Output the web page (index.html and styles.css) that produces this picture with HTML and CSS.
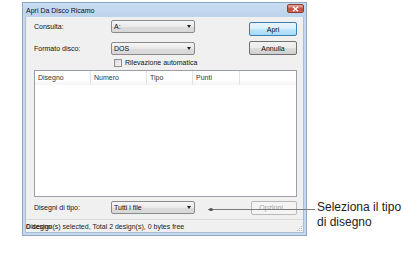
FILE: index.html
```html
<!DOCTYPE html>
<html>
<head>
<meta charset="utf-8">
<link rel="stylesheet" href="styles.css">
</head>
<body>
<div class="stage">
  <div class="dialog">
    <div class="titlebar">
      <span class="title">Apri Da Disco Ricamo</span>
      <span class="close"><svg width="7" height="6" viewBox="0 0 7 6"><path d="M1 0.8 L6 5.2 M6 0.8 L1 5.2" stroke="#fff" stroke-width="1.4"/></svg></span>
    </div>
    <div class="client">
      <div class="top">
        <div class="fields">
          <div class="row">
            <span class="label">Consulta:</span>
            <div class="combo"><span>A:</span><i class="arrow"></i></div>
          </div>
          <div class="row row2">
            <span class="label">Formato disco:</span>
            <div class="combo"><span>DOS</span><i class="arrow"></i></div>
          </div>
          <div class="check-row"><span class="check"></span><span>Rilevazione automatica</span></div>
        </div>
        <div class="buttons">
          <div class="btn default">Apri</div>
          <div class="btn">Annulla</div>
        </div>
      </div>
      <div class="list">
        <div class="list-header">
          <span class="col c1">Disegno</span>
          <span class="col c2">Numero</span>
          <span class="col c3">Tipo</span>
          <span class="col c4">Punti</span>
          <span class="col c5"></span>
        </div>
      </div>
      <div class="bottom-row">
        <span class="label">Disegni di tipo:</span>
        <div class="combo"><span>Tutti i file</span><i class="arrow"></i></div>
        <div class="btn disabled">Opzioni...</div>
      </div>
      <div class="status">
        <span class="status-text">0 design(s) selected, Total 2 design(s), 0 bytes free</span>
        <span class="status-over">Disegno</span>
        <svg class="grip" width="8" height="8" viewBox="0 0 8 8">
          <rect x="6" y="2" width="1" height="1" fill="#b5b5b5"/>
          <rect x="4" y="4" width="1" height="1" fill="#b5b5b5"/>
          <rect x="6" y="4" width="1" height="1" fill="#b5b5b5"/>
          <rect x="2" y="6" width="1" height="1" fill="#b5b5b5"/>
          <rect x="4" y="6" width="1" height="1" fill="#b5b5b5"/>
          <rect x="6" y="6" width="1" height="1" fill="#b5b5b5"/>
        </svg>
      </div>
    </div>
  </div>
  <div class="callout-line"><span class="dot"></span></div>
  <div class="callout-text">Seleziona il tipo<br>di disegno</div>
</div>
</body>
</html>
```

FILE: styles.css
```css
* { box-sizing: border-box; }
html, body { margin: 0; padding: 0; background: #fff; }
body { width: 403px; height: 255px; overflow: hidden; font-family: "Liberation Sans", Arial, sans-serif; }

.stage { position: relative; width: 403px; height: 255px; padding: 2px 0 0 22px; }

.dialog {
  width: 285px;
  height: 234px;
  border: 1px solid #8ea8c4;
  background: #c4d9ef;
  padding: 0 2px 2px 2px;
  display: flex;
  flex-direction: column;
  font-size: 7px;
  color: #111;
}

.titlebar {
  height: 14px;
  display: flex;
  align-items: flex-start;
  justify-content: space-between;
  background: linear-gradient(#c9dcf1, #bcd3ec);
  margin: 0 -2px;
  padding: 0 2px 0 3px;
}
.title { font-size: 7px; line-height: 15px; color: #111; }
.close {
  width: 17px;
  height: 9px;
  margin-top: 1px;
  border: 1px solid #8a3a32;
  border-radius: 2px;
  background: linear-gradient(#e8a99e, #d06a5c 45%, #c0473a 55%, #cd6a55);
  display: flex;
  align-items: center;
  justify-content: center;
}

.client {
  flex: 1;
  background: #f0f0f0;
  display: flex;
  flex-direction: column;
  padding: 0 6px 0 8px;
  border: 1px solid #a9bdd3;
  border-top: none;
}

.top { display: flex; }
.fields { flex: 1; padding-top: 3px; }
.row { display: flex; align-items: center; height: 13px; }
.row2 { margin-top: 9px; }
.label { width: 77px; flex: none; line-height: 12px; }

.combo {
  width: 84px;
  height: 13px;
  border: 1px solid #8b8b8b;
  border-radius: 2px;
  background: linear-gradient(#f6f6f6, #e9e9e9 50%, #dcdcdc 51%, #d8d8d8);
  display: flex;
  align-items: center;
  justify-content: space-between;
  padding: 0 3px 0 2px;
  line-height: 10px;
}
.arrow {
  width: 0; height: 0;
  border-left: 2.5px solid transparent;
  border-right: 2.5px solid transparent;
  border-top: 3px solid #222;
}

.check-row { display: flex; align-items: center; margin: 3px 0 0 80px; height: 9px; gap: 3px; }
.check {
  width: 8px; height: 8px;
  border: 1px solid #8f8f8f;
  background: linear-gradient(135deg, #dcdcdc, #f4f4f4);
}

.buttons { width: 48px; padding-top: 5px; display: flex; flex-direction: column; gap: 5px; }
.btn {
  height: 14px;
  border: 1px solid #707070;
  border-radius: 2px;
  background: linear-gradient(#f3f3f3, #ebebeb 50%, #dddddd 51%, #cfcfcf);
  display: flex;
  align-items: center;
  justify-content: center;
  color: #111;
}
.btn.default {
  border-color: #3c7fb1;
  background: linear-gradient(#eaf6fd, #d9f0fc 50%, #bee6fd 51%, #a7d9f5);
}
.btn.disabled {
  border-color: #b7babd;
  background: #f4f4f4;
  color: #a3a3a3;
  width: 46px;
  margin-left: auto;
}

.list {
  margin-top: 3px;
  height: 127px;
  border: 1px solid #9a9fa6;
  background: #fff;
}
.list-header { display: flex; height: 14px; }
.col {
  border-right: 1px solid #e3e3e3;
  padding-left: 3px;
  line-height: 14px;
  color: #333;
  background: linear-gradient(#fff, #fff 60%, #f5f5f5);
}
.c1 { width: 56px; }
.c2 { width: 56px; }
.c3 { width: 46px; }
.c4 { width: 47px; }
.c5 { flex: 1; border-right: none; }

.bottom-row { display: flex; align-items: center; margin-top: 4px; height: 13px; }

.status {
  position: relative;
  margin: 5px -6px 0 -8px;
  flex: 1;
  border-top: 1px solid #dadada;
  display: flex;
  align-items: center;
  padding-left: 0;
}
.status-text { color: #222; }
.status-over { position: absolute; left: 0; top: 50%; transform: translateY(-50%); color: #222; }
.grip { position: absolute; right: 0; bottom: 0; }

.callout-line {
  position: absolute;
  left: 208px;
  top: 209px;
  width: 107px;
  height: 1px;
  background: #7a7a7a;
}
.dot {
  position: absolute;
  left: 1px;
  top: -1px;
  width: 4px;
  height: 3px;
  border-radius: 50%;
  background: #555;
}
.callout-text {
  position: absolute;
  left: 317px;
  top: 200px;
  font-size: 12px;
  line-height: 15px;
  color: #222;
}
```
